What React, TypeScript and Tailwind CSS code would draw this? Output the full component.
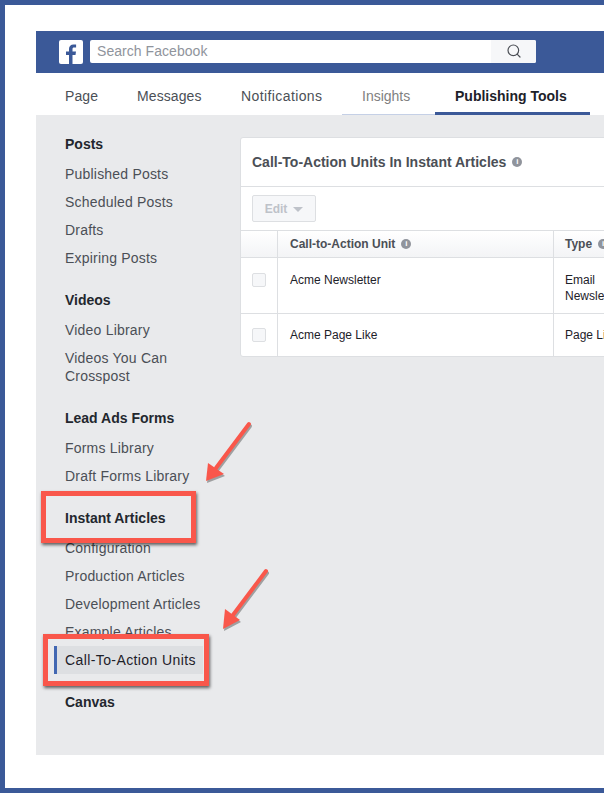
import { Search } from "lucide-react";

type Section = { title: string; items: string[] };

const SECTIONS: Section[] = [
  { title: "Posts", items: ["Published Posts", "Scheduled Posts", "Drafts", "Expiring Posts"] },
  { title: "Videos", items: ["Video Library", "Videos You Can Crosspost"] },
  { title: "Lead Ads Forms", items: ["Forms Library", "Draft Forms Library"] },
  {
    title: "Instant Articles",
    items: ["Configuration", "Production Articles", "Development Articles", "Example Articles", "Call-To-Action Units"],
  },
  { title: "Canvas", items: [] },
];

function InfoDot({ className = "" }: { className?: string }) {
  return (
    <span className={`inline-flex h-[10px] w-[10px] items-center justify-center rounded-full bg-[#90949c] text-[8px] font-bold leading-none text-white ${className}`}>
      i
    </span>
  );
}

function Arrow({ className, d, head }: { className: string; d: string; head: string }) {
  return (
    <svg className={className} viewBox="0 0 60 70" fill="none">
      <path d={d} transform="translate(1 2)" stroke="#555" strokeOpacity="0.5" strokeWidth="4" strokeLinecap="round" />
      <path d={head} transform="translate(1 2)" fill="#555" fillOpacity="0.5" />
      <path d={d} stroke="#f9574b" strokeWidth="4" strokeLinecap="round" />
      <path d={head} fill="#f9574b" />
    </svg>
  );
}

function Sidebar() {
  return (
    <div className="w-[204px] shrink-0 pt-[20px]">
      {SECTIONS.map((s, i) => (
        <div key={s.title} className={i > 0 ? "mt-[19px]" : ""}>
          <div className="pl-[29px] text-[14px] font-bold leading-[18px] text-[#23272e]">{s.title}</div>
          <div className={s.items.length ? "mt-[7px] flex flex-col" : "hidden"}>
            {s.items.map((item) => {
              const active = item === "Call-To-Action Units";
              return (
                <div
                  key={item}
                  className={
                    active
                      ? "ml-[18px] flex h-[28px] w-[149px] items-center border-l-[3px] border-[#4267b2] bg-[#dddfe2] pl-[8px] text-[14px] tracking-[0.4px] text-[#1d2129]"
                      : "flex min-h-[28px] items-center py-[5px] pl-[29px] pr-[20px] text-[14px] leading-[18px] tracking-[0.2px] text-[#4b4f56]"
                  }
                >
                  {item}
                </div>
              );
            })}
          </div>
        </div>
      ))}
    </div>
  );
}

function CtaCard() {
  return (
    <div className="mt-[22px] h-[220px] w-[500px] shrink-0 rounded-[3px] border border-[#dddfe2] bg-white">
      <div className="flex h-[49px] items-center border-b border-[#dddfe2] pl-[11px] text-[14px] font-bold text-[#4b4f56]">
        Call-To-Action Units In Instant Articles
        <InfoDot className="ml-[6px]" />
      </div>
      <div className="flex h-[43px] items-center pl-[11px]">
        <div className="flex h-[27px] w-[64px] items-center justify-center gap-[6px] rounded-[2px] border border-[#dddfe2] bg-[#f6f7f9] text-[12px] font-bold text-[#bec2c9]">
          Edit
          <span className="mt-[2px] border-x-[5px] border-t-[5px] border-x-transparent border-t-[#bec2c9]" />
        </div>
      </div>
      <div className="flex h-[28px] border-y border-[#dddfe2] bg-gradient-to-b from-white to-[#f3f4f6] text-[12px] font-bold text-[#4b4f56]">
        <div className="w-[37px] border-r border-[#dddfe2]" />
        <div className="flex w-[276px] items-center border-r border-[#dddfe2] pl-[12px]">
          Call-to-Action Unit
          <InfoDot className="ml-[6px]" />
        </div>
        <div className="flex items-center pl-[11px]">
          Type
          <InfoDot className="ml-[6px]" />
        </div>
      </div>
      <div className="flex h-[56px] border-b border-[#dddfe2] text-[12px] text-[#1d2129]">
        <div className="w-[37px] border-r border-[#dddfe2] pl-[11px] pt-[15px]">
          <div className="h-[14px] w-[14px] rounded-[2px] border border-[#dddfe2] bg-[#f6f7f9]" />
        </div>
        <div className="w-[276px] border-r border-[#dddfe2] pl-[12px] pt-[14px] leading-[16px]">Acme Newsletter</div>
        <div className="pl-[11px] pt-[14px] leading-[16px]">
          Email
          <br />
          Newsletter
        </div>
      </div>
      <div className="flex h-[42px] text-[12px] text-[#1d2129]">
        <div className="w-[37px] border-r border-[#dddfe2] pl-[11px] pt-[14px]">
          <div className="h-[14px] w-[14px] rounded-[2px] border border-[#dddfe2] bg-[#f6f7f9]" />
        </div>
        <div className="w-[276px] border-r border-[#dddfe2] pl-[12px] pt-[13px] leading-[16px]">Acme Page Like</div>
        <div className="pl-[11px] pt-[13px] leading-[16px]">Page Like</div>
      </div>
    </div>
  );
}

export default function App() {
  return (
    <div className="relative h-[793px] w-[604px] overflow-hidden bg-[#3b5998] pl-[5px] pt-[5px] pb-[5px] font-['Liberation_Sans',Arial,sans-serif]">
      <div className="h-[783px] bg-white pl-[31px] pt-[26px]">
        <div className="flex h-[42px] items-start bg-[#3b5998] pl-[23px] pt-[9px]">
          <div className="relative h-[24px] w-[24px] overflow-hidden rounded-[2px] bg-white">
            <svg className="absolute left-[5px] top-[3px] h-[21px] w-[14px]" viewBox="0 0 14 21">
              <path d="M5 21V12H2V8.500H5V6C5 3 6.800 1.400 9.500 1.400C10.700 1.400 11.800 1.500 12.100 1.500V4.600H10.300C8.800 4.600 8.500 5.300 8.500 6.300V8.500H12L11.500 12H8.500V21Z" fill="#3b5998" />
            </svg>
          </div>
          <div className="ml-[7px] flex h-[23px] w-[446px] items-center overflow-hidden rounded-[2px] bg-white">
            <div className="flex-1 pb-[1px] pl-[7px] text-[14px] tracking-[0.05px] text-[#90949c]">Search Facebook</div>
            <div className="flex h-full w-[45px] items-center justify-center bg-[#f6f7f9] pb-[2px]">
              <Search size={16} strokeWidth={1.800} className="text-[#4b4f56]" />
            </div>
          </div>
        </div>
        <div className="flex h-[42px] items-stretch bg-white pt-0 text-[14px] leading-[18px]">
          <div className="w-[101px] pl-[29px] pt-[14px] tracking-[0.1px] text-[#4b4f56]">Page</div>
          <div className="w-[104px] pt-[14px] tracking-[0.1px] text-[#4b4f56]">Messages</div>
          <div className="w-[101px] pt-[14px] tracking-[0.4px] text-[#4b4f56]">Notifications</div>
          <div className="w-[93px] border-b border-[#c5d0e6] pl-[20px] pt-[14px] text-[#7f7f7f]">Insights</div>
          <div className="w-[155px] border-b-[3px] border-[#3b5998] pl-[20px] pt-[14px] font-bold text-[#1d2129]">Publishing Tools</div>
        </div>
        <div className="flex h-[640px] overflow-hidden bg-[#e9eaec]">
          <Sidebar />
          <CtaCard />
        </div>
      </div>

      <div className="absolute left-[41px] top-[491px] h-[52px] w-[155px] border-[5px] border-[#f9574b] shadow-[1px_2px_3px_rgba(0,0,0,0.6)]" />
      <div className="absolute left-[43px] top-[634px] h-[52px] w-[166px] border-[5px] border-[#f9574b] shadow-[1px_2px_3px_rgba(0,0,0,0.6)]" />
      <Arrow className="absolute left-[200px] top-[418px] h-[70px] w-[60px]" d="M49 6L16 50" head="M6 63L8 45L24 56Z" />
      <Arrow className="absolute left-[218px] top-[566px] h-[70px] w-[60px]" d="M48 5L15 49" head="M5 63L7 43L22 54Z" />
    </div>
  );
}
